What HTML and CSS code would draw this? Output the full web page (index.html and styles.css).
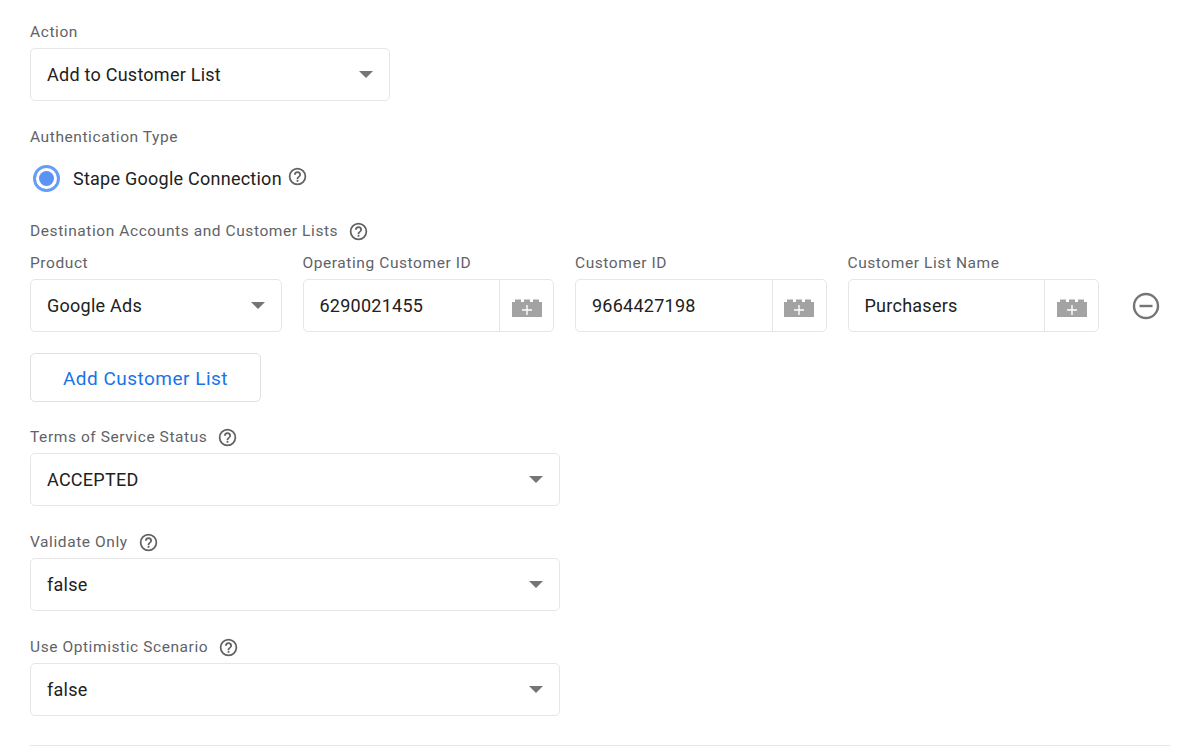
FILE: index.html
```html
<!DOCTYPE html>
<html lang="en">
<head>
<meta charset="utf-8">
<title>Add to Customer List</title>
<link rel="stylesheet" href="styles.css">
</head>
<body>
<svg class="defs" width="0" height="0" aria-hidden="true">
  <symbol id="help" viewBox="0 0 24 24">
    <path fill="currentColor" d="M12 2a10 10 0 1 0 0 20 10 10 0 0 0 0-20zm0 18a8 8 0 1 1 0-16 8 8 0 0 1 0 16zM11 16h2v2h-2zm1-10a4 4 0 0 0-4 4h2a2 2 0 1 1 4 0c0 2-3 1.750-3 5h2c0-2.250 3-2.500 3-5a4 4 0 0 0-4-4z"/>
  </symbol>
  <symbol id="brick" viewBox="0 0 30 18">
    <path fill="#a3a3a3" d="M0 3h3V.500h6V3h3V.500h6V3h3V.500h6V3h3v15H0z"/>
    <path fill="#fff" d="M14.300 6h1.400v4.300H20v1.400h-4.300V16h-1.400v-4.300H10v-1.400h4.300z"/>
  </symbol>
</svg>
<main class="form">
  <section class="field">
    <div class="label">Action</div>
    <div class="select w-360"><span>Add to Customer List</span><i class="caret"></i></div>
  </section>

  <section class="field field-auth">
    <div class="label">Authentication Type</div>
    <div class="radio-row">
      <span class="radio"><span class="radio-dot"></span></span>
      <span class="radio-text">Stape Google Connection</span>
      <svg class="help help-radio"><use href="#help"/></svg>
    </div>
  </section>

  <section class="field field-dest">
    <div class="label label-help">Destination Accounts and Customer Lists <svg class="help"><use href="#help"/></svg></div>
    <div class="row">
      <div class="col">
        <div class="label">Product</div>
        <div class="select"><span>Google Ads</span><i class="caret"></i></div>
      </div>
      <div class="col">
        <div class="label">Operating Customer ID</div>
        <div class="input"><span class="value">6290021455</span><span class="var"><svg class="brick"><use href="#brick"/></svg></span></div>
      </div>
      <div class="col">
        <div class="label">Customer ID</div>
        <div class="input"><span class="value">9664427198</span><span class="var"><svg class="brick"><use href="#brick"/></svg></span></div>
      </div>
      <div class="col">
        <div class="label">Customer List Name</div>
        <div class="input"><span class="value">Purchasers</span><span class="var"><svg class="brick"><use href="#brick"/></svg></span></div>
      </div>
      <svg class="remove" viewBox="0 0 28 28"><circle cx="14" cy="14" r="12" fill="none" stroke="#757575" stroke-width="2.400"/><path d="M7.500 14h13" stroke="#757575" stroke-width="2.400"/></svg>
    </div>
    <button class="add-btn" type="button">Add Customer List</button>
  </section>

  <section class="field field-tos">
    <div class="label label-help">Terms of Service Status <svg class="help"><use href="#help"/></svg></div>
    <div class="select w-530"><span>ACCEPTED</span><i class="caret"></i></div>
  </section>

  <section class="field field-next">
    <div class="label label-help">Validate Only <svg class="help"><use href="#help"/></svg></div>
    <div class="select w-530"><span>false</span><i class="caret"></i></div>
  </section>

  <section class="field field-next">
    <div class="label label-help">Use Optimistic Scenario <svg class="help"><use href="#help"/></svg></div>
    <div class="select w-530"><span>false</span><i class="caret"></i></div>
  </section>

  <hr class="rule">
</main>
</body>
</html>
```

FILE: styles.css
```css
* { box-sizing: border-box; }
html, body { margin: 0; height: 100%; overflow: hidden; background: #fff; }
body { font-family: Roboto, "Liberation Sans", sans-serif; color: #212121; }
.defs { position: absolute; }
.form { padding: 23px 30px 0; }
.field { display: block; }
.label {
  font-size: 15.5px;
  line-height: 18px;
  letter-spacing: 0.58px;
  color: #5f6368;
}
.label-help { display: flex; align-items: center; gap: 10px; height: 18px; }
.help { width: 21px; height: 21px; color: #616161; flex: none; }
.select, .input {
  height: 53px;
  margin-top: 7px;
  border: 1px solid #e6e6e6;
  border-radius: 5px;
  background: #fff;
  font-size: 18px;
  letter-spacing: 0.25px;
  color: #212121;
  display: flex;
  align-items: center;
}
.select { padding: 0 16px; justify-content: space-between; }
.w-360 { width: 360px; }
.w-530 { width: 530px; }
.caret {
  width: 0; height: 0;
  border-left: 7px solid transparent;
  border-right: 7px solid transparent;
  border-top: 7px solid #757575;
}
.field-auth { margin-top: 27px; }
.radio-row { display: flex; align-items: center; margin-top: 14px; height: 36px; padding-left: 3px; }
.radio {
  width: 27px; height: 27px;
  border: 3px solid #669df6;
  border-radius: 50%;
  display: flex; align-items: center; justify-content: center;
}
.radio-dot { width: 15px; height: 15px; border-radius: 50%; background: #5b93f5; }
.radio-text { font-size: 18px; letter-spacing: 0.25px; margin-left: 13px; color: #212121; }
.help-radio { margin-left: 5px; margin-top: -3px; }
.field-dest { margin-top: 26px; }
.row { display: flex; gap: 21px; margin-top: 14px; position: relative; width: 1069px; }
.col { flex: 1 1 0; min-width: 0; }
.input { overflow: hidden; }
.value { flex: 1; padding-left: 16px; }
.var {
  width: 54px; height: 100%;
  border-left: 1px solid #e6e6e6;
  display: flex; align-items: center; justify-content: center;
}
.brick { width: 30px; height: 18px; margin-top: 4px; }
.remove { position: absolute; left: 1102px; top: 38px; width: 28px; height: 28px; }
.add-btn {
  display: block;
  width: 231px; height: 49px;
  margin-top: 21px;
  padding: 1px 0 0;
  background: #fff;
  border: 1px solid #e0e0e0;
  border-radius: 5px;
  font: 450 19px Roboto, "Liberation Sans", sans-serif;
  letter-spacing: 0.48px;
  color: #1a73e8;
}
.field-tos { margin-top: 26px; }
.field-next { margin-top: 27px; }
.rule { border: 0; border-top: 1px solid #e6e6e6; margin: 29px 0 0; width: 1140px; }
```
